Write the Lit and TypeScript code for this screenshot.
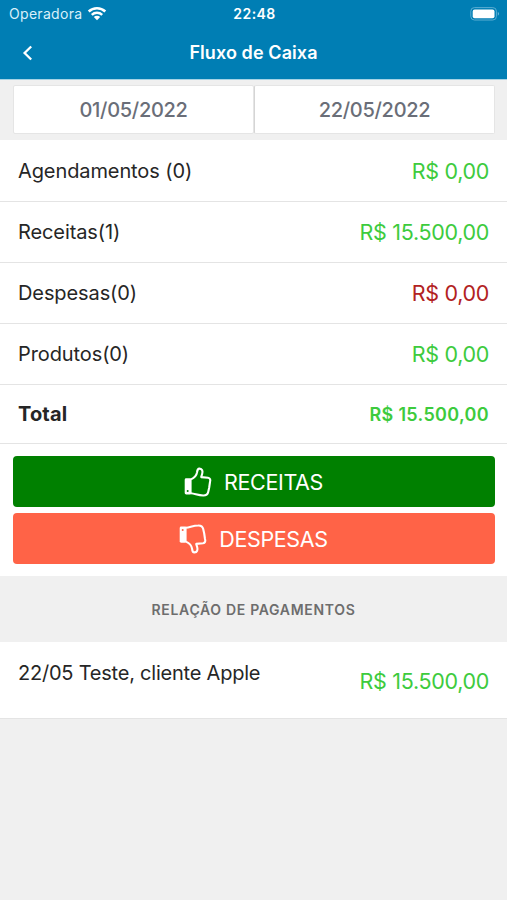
import { LitElement, html, css, svg } from "lit";
import { customElement, property } from "lit/decorators.js";
import { classMap } from "lit/directives/class-map.js";

@customElement("status-bar")
class StatusBar extends LitElement {
  static styles = css`
    :host { display: flex; height: 27px; align-items: center; justify-content: space-between; padding: 0 7px 0 9px; color: #fff; }
    .side { flex: 1; display: flex; align-items: center; gap: 5px; font-size: 14px; letter-spacing: 0.3px; color: #d9f0fa; }
    .end { justify-content: flex-end; }
    .time { font-size: 14px; font-weight: 600; letter-spacing: 0.45px; }
    svg { display: block; }
  `;
  render() {
    return html`
      <div class="side">
        <span>Operadora</span>
        <svg width="20" height="15" viewBox="0 0 20 15" fill="none" stroke="#fff" stroke-width="2.5">
          <path d="M1.7 5.5 A12 12 0 0 1 18.3 5.5" />
          <path d="M4.8 8.9 A7.6 7.6 0 0 1 15.2 8.9" />
          <path d="M10 14.2 L6.8 11.1 A4.6 4.6 0 0 1 13.2 11.1 Z" fill="#fff" stroke="none" />
        </svg>
      </div>
      <span class="time">22:48</span>
      <div class="side end">
        <svg width="30" height="14" viewBox="0 0 30 14">
          <rect x="0.8" y="0.6" width="25.6" height="12.4" rx="3.6" fill="none" stroke="#5aadd2" stroke-width="1" />
          <rect x="2.7" y="2.4" width="21.8" height="8.8" rx="2" fill="#fff" />
          <path d="M27.8 4.8 Q30.2 6.8 27.8 8.8 Z" fill="#70b9da" />
        </svg>
      </div>
    `;
  }
}

@customElement("money-row")
class MoneyRow extends LitElement {
  @property() label = "";
  @property() value = "";
  @property() kind = "income";
  static styles = css`
    :host { display: block; }
    .row { box-sizing: border-box; height: 61px; padding: 0 18px; display: flex; align-items: center; justify-content: space-between; background: #fff; border-bottom: 1px solid #e4e4e4; color: #262626; font-size: 20px; }
    .label { letter-spacing: -0.1px; }
    .value { font-size: 21.5px; letter-spacing: -0.32px; color: #3dcb3d; }
    .expense .value { color: #b22222; }
    .total { height: 59px; font-weight: 700; }
    .total .label { letter-spacing: 0.15px; }
    .total .value { font-size: 18px; font-weight: 600; letter-spacing: 0.33px; }
    .payment { height: 77px; padding-top: 2px; }
    .payment .label { margin-bottom: 16px; letter-spacing: -0.22px; }
  `;
  render() {
    return html`<div class=${classMap({ row: true, [this.kind]: true })}>
      <span class="label">${this.label}</span><span class="value">${this.value}</span>
    </div>`;
  }
}

const thumb = svg`
  <path d="M7 12.4 C9.8 11.2 12.6 8.2 13.1 5.2 C13.3 2.6 14 1.5 15.5 1.6 C18.2 1.8 19 4.2 18.2 6.8 L17.2 10.1 L24 10.8 C26.2 11.1 26.7 13 26 15 L25.2 20.5 L24.2 25 C23.6 27.5 22.3 28.6 19.2 28.5 C14.5 28.5 11.4 26.9 7 26.3" fill="none" stroke="#fff" stroke-width="2.1" stroke-linejoin="round" />
  <path d="M2.2 11.3 H6.2 Q7.6 11.3 7.6 12.7 V26 Q7.6 27.4 6.2 27.4 H2.2 Q0.7 27.4 0.7 26 V12.7 Q0.7 11.3 2.2 11.3 Z" fill="#fff" />
`;

@customElement("app-root")
class AppRoot extends LitElement {
  static styles = css`
    :host { display: block; height: 900px; overflow: hidden; background: #f0f0f0; font-family: Inter, "Liberation Sans", sans-serif; }
    .header { height: 80px; box-sizing: border-box; background: #007eb4; border-bottom: 1px solid #a5d3e5; }
    .nav { height: 51px; display: grid; grid-template-columns: 60px 1fr 60px; align-items: center; }
    .back { display: block; margin-left: 22px; }
    .title { text-align: center; color: #fff; font-size: 18px; font-weight: 600; letter-spacing: 0.09px; }
    .dates { box-sizing: border-box; height: 60px; padding: 5px 12px 6px 13px; display: flex; }
    .date { flex: 1; box-sizing: border-box; display: flex; align-items: center; justify-content: center; background: #fff; border: 1px solid #e5e5e5; border-radius: 2px; color: #6a6e78; font-size: 20px; font-weight: 450; letter-spacing: -0.3px; }
    .date + .date { border-left: 1px solid #d5d5d5; }
    .summary { padding-top: 1px; background: #fff; }
    .actions { box-sizing: border-box; height: 132px; padding: 12px 12px 0 13px; display: flex; flex-direction: column; gap: 6px; background: #fff; }
    .action { height: 51px; display: flex; align-items: center; justify-content: center; gap: 12px; border-radius: 4px; color: #fff; font-size: 21.5px; letter-spacing: -0.35px; }
    .action span { margin-right: 1px; }
    .receitas { background: #008000; }
    .despesas { background: #ff6347; }
    .down { transform: scaleY(-1); }
    .section { height: 66px; display: flex; align-items: center; justify-content: center; color: #6d6d6d; font-size: 14px; font-weight: 600; letter-spacing: 0.68px; }
  `;
  render() {
    return html`
      <div class="header">
        <status-bar></status-bar>
        <div class="nav">
          <svg class="back" width="12" height="16" viewBox="0 0 12 16" fill="none" stroke="#fff" stroke-width="2.3"><path d="M9.2 1.5 L2.6 8 L9.2 14.5" /></svg>
          <span class="title">Fluxo de Caixa</span>
        </div>
      </div>
      <div class="dates"><div class="date"><span>01/05/2022</span></div><div class="date"><span>22/05/2022</span></div></div>
      <div class="summary">
        <money-row label="Agendamentos (0)" value="R$ 0,00"></money-row>
        <money-row label="Receitas(1)" value="R$ 15.500,00"></money-row>
        <money-row label="Despesas(0)" value="R$ 0,00" kind="expense"></money-row>
        <money-row label="Produtos(0)" value="R$ 0,00"></money-row>
        <money-row label="Total" value="R$ 15.500,00" kind="total"></money-row>
      </div>
      <div class="actions">
        <div class="action receitas">
          <svg width="28" height="30" viewBox="0 0 28 30">${thumb}<circle cx="3.7" cy="24" r="1" fill="#008000" /></svg>
          <span>RECEITAS</span>
        </div>
        <div class="action despesas">
          <svg class="down" width="28" height="30" viewBox="0 0 28 30">${thumb}<circle cx="3.7" cy="24" r="1" fill="#ff6347" /></svg>
          <span>DESPESAS</span>
        </div>
      </div>
      <div class="section">RELAÇÃO DE PAGAMENTOS</div>
      <money-row label="22/05 Teste, cliente Apple" value="R$ 15.500,00" kind="payment"></money-row>
    `;
  }
}
